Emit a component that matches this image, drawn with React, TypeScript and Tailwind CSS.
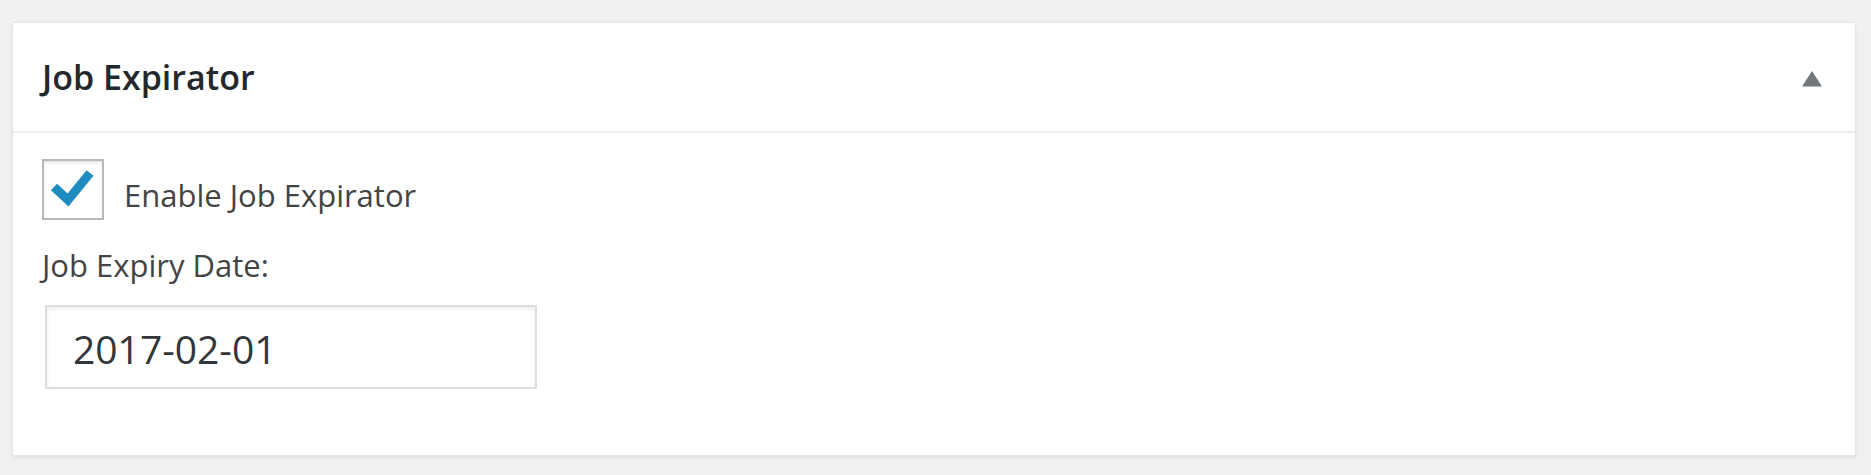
import React from "react";

export default function App() {
  return (
    <div className="min-h-[475px] bg-[#f1f1f1] pl-[12px] pr-[15px] pt-[22px] font-['Open_Sans',sans-serif]">
      <div className="border border-[#e5e5e5] bg-white shadow-[0_2px_4px_rgba(0,0,0,0.07)]">
        <div className="flex h-[110px] items-center justify-between border-b-2 border-[#eeeeee] pl-[29px] pr-[33px]">
          <h2 className="text-[34px] font-semibold leading-[49px] text-[#23282d]">Job Expirator</h2>
          <svg width="20" height="16" viewBox="0 0 20 16" className="mt-[4px]">
            <polygon points="10,0 20,15.5 0,15.5" fill="#72777c" />
          </svg>
        </div>
        <div className="pl-[29px] pr-[29px] pt-[26px] pb-[66px]">
          <label className="flex items-start">
            <span className="flex h-[61px] w-[62px] shrink-0 items-center justify-center border-2 border-[#b4b9be] bg-white shadow-[inset_0_2px_3px_rgba(0,0,0,0.1)]">
              <svg width="58" height="57" viewBox="0 0 58 57">
                <polyline
                  points="10,26 24,39 46,12"
                  fill="none"
                  stroke="#1e8cbe"
                  strokeWidth="9"
                  strokeLinecap="butt"
                  strokeLinejoin="miter"
                />
              </svg>
            </span>
            <span className="ml-[20px] mt-[14px] text-[31px] leading-[44px] text-[#444444]">Enable Job Expirator</span>
          </label>
          <div className="mt-[23px] text-[31px] leading-[44px] text-[#444444]">Job Expiry Date:</div>
          <input
            type="text"
            readOnly
            value="2017-02-01"
            className="ml-[3px] mt-[18px] box-border block h-[84px] w-[492px] border-2 border-[#dddddd] bg-white pl-[26px] pt-[3px] text-[39px] text-[#32373c] shadow-[inset_0_2px_4px_rgba(0,0,0,0.07)] outline-none"
          />
        </div>
      </div>
    </div>
  );
}
